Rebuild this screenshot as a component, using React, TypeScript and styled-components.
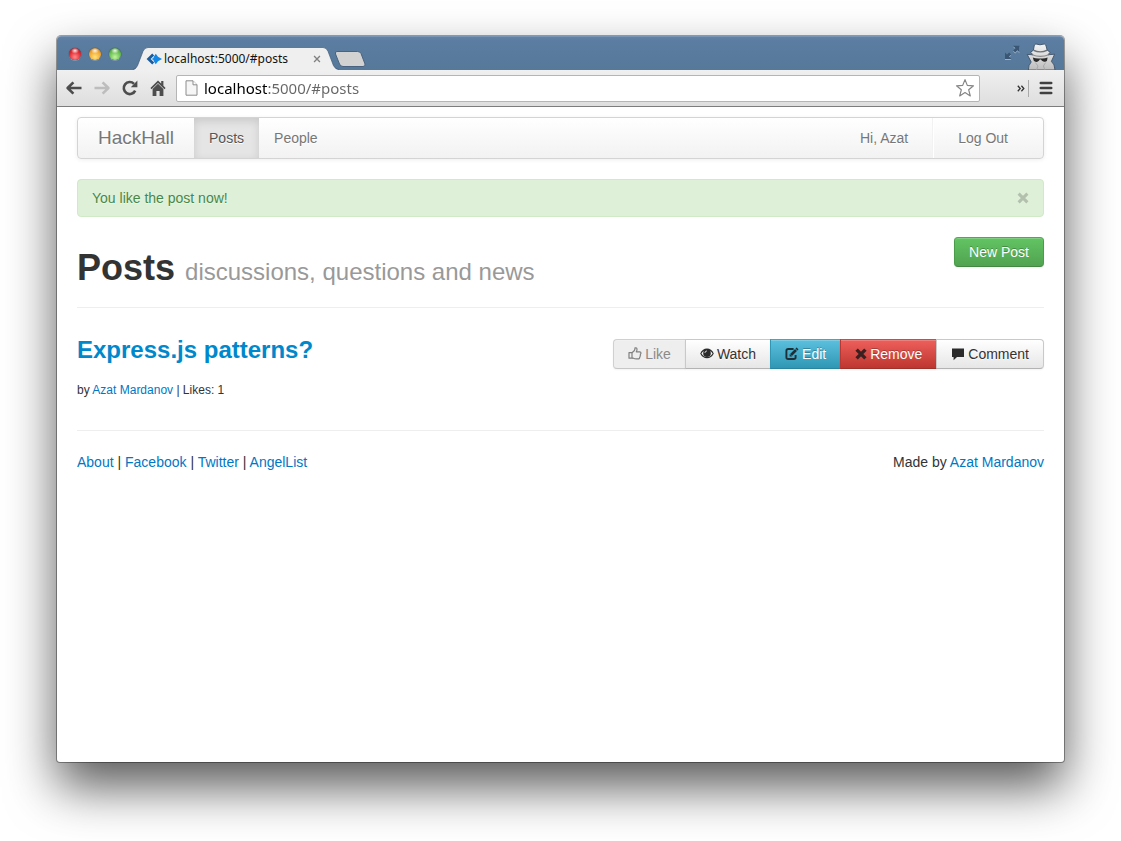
import React from 'react';
import styled, { createGlobalStyle, css } from 'styled-components';

const GlobalStyle = createGlobalStyle`
  *, *::before, *::after { box-sizing: border-box; }
  body {
    margin: 0;
    background: #fff;
    color: #333;
    font: 14px/20px "Helvetica Neue", "Liberation Sans", Arial, sans-serif;
  }
  a { color: #0077c4; text-decoration: none; }
  a:hover { text-decoration: underline; }
  button { font-family: inherit; cursor: pointer; }
  svg { display: block; flex: none; }
`;

const Desktop = styled.div`
  display: flex;
  min-height: 100vh;
  padding: 36px 57px 79px;
`;

const Window = styled.div`
  flex: 1;
  min-width: 0;
  display: flex;
  flex-direction: column;
  background: #fff;
  border-radius: 4px 4px 3px 3px;
  box-shadow: 0 0 0 1px rgba(0, 0, 0, 0.35), 0 25px 50px rgba(0, 0, 0, 0.65);
`;

/* Browser chrome */

const TitleBar = styled.header`
  display: flex;
  align-items: flex-end;
  height: 34px;
  padding: 0 8px 0 12px;
  background: linear-gradient(#6482a5, #5b7da1 4px, #567899);
  border-radius: 4px 4px 0 0;
  border-top: 1px solid #7b96b5;
`;

const Lights = styled.div`
  display: flex;
  gap: 8px;
  padding-bottom: 10px;
`;

const Light = styled.button<{ $rim: string; $core: string; $glow: string }>`
  width: 12px;
  height: 12px;
  padding: 0;
  border: 0;
  border-radius: 50%;
  background:
    radial-gradient(ellipse 4px 3px at 50% 22%, rgba(255, 255, 255, 0.9), rgba(255, 255, 255, 0) 100%),
    radial-gradient(circle at 50% 75%, ${p => p.$glow}, ${p => p.$core} 55%, ${p => p.$rim} 100%);
  box-shadow: 0 0 1px rgba(0, 0, 0, 0.7), 0 1px 0 rgba(255, 255, 255, 0.3);
`;

const Tab = styled.div`
  position: relative;
  display: flex;
  align-items: center;
  width: 206px;
  height: 23px;
  margin-left: 12px;
  padding: 0 18px 0 13px;
`;

const TabShape = styled.svg`
  position: absolute;
  inset: 0;
`;

const TabIcon = styled.span`
  position: relative;
`;

const TabTitle = styled.span`
  position: relative;
  flex: 1;
  margin-left: 2px;
  color: #111;
  font: 12px/16px "Lucida Grande", "Noto Sans", sans-serif;
  white-space: nowrap;
`;

const BareButton = styled.button`
  position: relative;
  display: flex;
  align-items: center;
  justify-content: center;
  padding: 0;
  border: 0;
  background: none;
  color: #4d4d4d;
`;

const NewTab = styled(BareButton)`
  margin: 0 0 3px -5px;
`;

const WindowTools = styled.div`
  display: flex;
  align-items: flex-end;
  gap: 6px;
  margin-left: auto;
`;

const FullscreenButton = styled(BareButton)`
  margin-bottom: 10px;
`;

const Toolbar = styled.nav`
  display: flex;
  align-items: center;
  height: 37px;
  padding: 0 11px 0 8px;
  background: linear-gradient(#f0f0f0, #dedede);
  border-bottom: 1px solid #7d7d7d;
`;

const NavButtons = styled.div`
  display: flex;
  gap: 10px;
`;

const AddressBar = styled.label`
  flex: 1;
  min-width: 0;
  display: flex;
  align-items: center;
  gap: 6px;
  height: 27px;
  margin: 0 37px 0 9px;
  padding: 0 4px 0 8px;
  background: #fff;
  border: 1px solid #b5b5b5;
  border-radius: 2px;
`;

const AddressInput = styled.input`
  flex: 1;
  min-width: 0;
  padding: 0;
  border: 0;
  outline: 0;
  height: 24px;
  font: 15px/24px "Lucida Grande", "Noto Sans", sans-serif;
  color: #666;
  background: linear-gradient(90deg, #000 63px, #666 63px);
  -webkit-background-clip: text;
  background-clip: text;
  -webkit-text-fill-color: transparent;
`;

const ToolDivider = styled.span`
  width: 1px;
  height: 17px;
  margin: 0 10px 0 3px;
  background: #aaa;
`;

/* Page */

const Page = styled.main`
  padding: 10px 20px 20px;
`;

const Navbar = styled.nav`
  display: flex;
  height: 42px;
  padding-right: 20px;
  background: linear-gradient(#fff, #f2f2f2);
  border: 1px solid #d4d4d4;
  border-radius: 4px;
  box-shadow: 0 1px 4px rgba(0, 0, 0, 0.065);
  text-shadow: 0 1px 0 #fff;
  line-height: 40px;
`;

const Brand = styled.a`
  padding: 0 20px;
  font-size: 19px;
  && { color: #777; }
`;

const NavLink = styled.a<{ $active?: boolean }>`
  padding: 0 15px;
  && { color: #777; }
  ${p => p.$active && css`
    && { color: #555; }
    background: #e5e5e5;
    box-shadow: inset 0 3px 8px rgba(0, 0, 0, 0.125);
  `}
`;

const NavRight = styled.div`
  display: flex;
  margin-left: auto;
`;

const NavDivider = styled.span`
  width: 2px;
  margin: 0 9px;
  border-left: 1px solid #f2f2f2;
  border-right: 1px solid #fff;
`;

const Alert = styled.div`
  display: flex;
  align-items: center;
  justify-content: space-between;
  height: 38px;
  margin-top: 20px;
  padding: 0 14px;
  color: #468847;
  background: #dff0d8;
  border: 1px solid #d0e9c6;
  border-radius: 4px;
  text-shadow: 0 1px 0 rgba(255, 255, 255, 0.5);
`;

const PageHeader = styled.header`
  display: flex;
  justify-content: space-between;
  align-items: flex-start;
  height: 71px;
  margin-top: 20px;
  border-bottom: 1px solid #eee;
`;

const Title = styled.h1`
  margin: 11px 0 0;
  font-size: 36px;
  line-height: 40px;
  color: #333;
`;

const Subtitle = styled.small`
  font-size: 24px;
  font-weight: 400;
  line-height: 40px;
  color: #999;
`;

type Tone = 'plain' | 'disabled' | 'info' | 'danger' | 'success';

const tones: Record<Tone, ReturnType<typeof css>> = {
  plain: css`
    color: #333;
    background: linear-gradient(#fff, #e6e6e6);
    border-color: #c9c9c9 #c9c9c9 #b3b3b3;
    text-shadow: 0 1px 1px rgba(255, 255, 255, 0.75);
  `,
  disabled: css`
    color: #8a8a8a;
    background: #eee;
    border-color: #d0d0d0 #c5c5c5 #c6c6c6 #d0d0d0;
  `,
  info: css`
    color: #fff;
    background: linear-gradient(#5bc0de, #2f96b4);
    border-color: #45a5c2 #2f96b4 #2a84a0;
    text-shadow: 0 -1px 0 rgba(0, 0, 0, 0.25);
  `,
  danger: css`
    color: #fff;
    background: linear-gradient(#ee5f5b, #bd362f);
    border-color: #cb4b47 #bd362f #a0302a;
    text-shadow: 0 -1px 0 rgba(0, 0, 0, 0.25);
  `,
  success: css`
    color: #fff;
    background: linear-gradient(#62c462, #51a351);
    border-color: #51a851 #4a9b4a #438743;
    text-shadow: 0 -1px 0 rgba(0, 0, 0, 0.25);
  `,
};

const Button = styled.button<{ $tone: Tone }>`
  display: flex;
  align-items: center;
  justify-content: center;
  gap: 3px;
  height: 30px;
  padding: 0 14px;
  border: 1px solid;
  border-radius: 4px;
  font-size: 14px;
  line-height: 20px;
  white-space: nowrap;
  box-shadow: inset 0 1px 0 rgba(255, 255, 255, 0.2), 0 1px 2px rgba(0, 0, 0, 0.05);
  ${p => tones[p.$tone]}
`;

const ButtonGroup = styled.div`
  display: flex;
  ${Button} { border-radius: 0; }
  ${Button} + ${Button} { margin-left: -1px; }
  ${Button}:first-child { border-radius: 4px 0 0 4px; }
  ${Button}:last-child { border-radius: 0 4px 4px 0; }
`;

const Post = styled.article`
  display: flex;
  justify-content: space-between;
  align-items: flex-start;
  height: 123px;
  padding-top: 31px;
  border-bottom: 1px solid #eee;
`;

const PostTitle = styled.h2`
  margin: 0;
  font-size: 24px;
  line-height: 22px;
  a { color: #0088cc; }
`;

const Meta = styled.p`
  margin: 19px 0 0;
  font-size: 12px;
  line-height: 20px;
`;

const Footer = styled.footer`
  display: flex;
  justify-content: space-between;
  margin-top: 21px;
`;

const glyph = '#4d4d4d';

const Favicon = () => (
  <svg width="16" height="14" viewBox="0 0 16 14">
    <path d="M7.2 2.6 2.6 7l4.6 4.400" fill="none" stroke="#1b5c9e" strokeWidth="2.800" />
    <path d="M9.800 1.800 12 4.800 16 7l-4 2.200-2.200 3L7.600 9V8L5.400 7l2.200-1V5z" fill="#1488e6" />
  </svg>
);

const Back = ({ color }: { color: string }) => (
  <svg width="18" height="18" viewBox="0 0 18 18" fill="none" stroke={color} strokeWidth="2.600">
    <path d="M8.400 3.400 2.600 9l5.800 5.600M3 9h13.500" strokeLinejoin="round" />
  </svg>
);

const Forward = ({ color }: { color: string }) => (
  <svg width="18" height="18" viewBox="0 0 18 18" fill="none" stroke={color} strokeWidth="2.600">
    <path d="M9.600 3.400 15.400 9l-5.800 5.600M15 9H1.500" strokeLinejoin="round" />
  </svg>
);

const Reload = () => (
  <svg width="18" height="18" viewBox="0 0 18 18">
    <path d="M14.200 11.600A6 6 0 1 1 13 4.800" fill="none" stroke={glyph} strokeWidth="2.600" />
    <path d="M16.400 1.600v6.600H9.800z" fill={glyph} />
  </svg>
);

const Home = () => (
  <svg width="18" height="18" viewBox="0 0 18 18" fill={glyph}>
    <path d="M9 1.400 1.400 8.900l1.200 1.300L9 4l6.400 6.200 1.200-1.300-2.200-2.200V2h-2.200v2.500z" />
    <path d="M9 4.800 3.600 10v7h3.800v-5h3.200v5h3.800v-7z" />
  </svg>
);

const PageIcon = () => (
  <svg width="13" height="16" viewBox="0 0 13 16" stroke="#8c8c8c" strokeLinejoin="round">
    <path d="M1 .8h7l4 4v10.400H1z" fill="#f6f6f6" />
    <path d="M8 .8v4h4" fill="#fff" />
  </svg>
);

const Star = () => (
  <svg width="20" height="20" viewBox="0 0 20 20">
    <path
      d="M10 1.600l2.300 5.800 6.200.4-4.800 4 1.600 6.100L10 14.500l-5.300 3.400 1.600-6.100-4.800-4 6.200-.4z"
      fill="#fff" stroke="#858585" strokeWidth="1.200" strokeLinejoin="round"
    />
  </svg>
);

const Fullscreen = () => (
  <svg width="15" height="15" viewBox="0 0 15 15">
    <g fill="#9db3c9">
      <path d="M8 1.800h6.400v6.400l-2-2-2.200 2.200-2-2 2.200-2.200z" />
      <path d="M6.400 15H0V8.600l2 2 2.200-2.200 2 2L4 12.600z" />
    </g>
    <g fill="#3a5674">
      <path d="M8 .8h6.400v6.400l-2-2-2.200 2.200-2-2 2.200-2.200z" />
      <path d="M6.400 14H0V7.600l2 2 2.200-2.200 2 2L4 11.600z" />
    </g>
  </svg>
);

const Incognito = () => (
  <svg width="30" height="27" viewBox="0 0 30 27">
    <defs>
      <linearGradient id="coat" x1="0" y1="0" x2="0" y2="1">
        <stop offset="0" stopColor="#f4f4f4" />
        <stop offset="1" stopColor="#bdbdbd" />
      </linearGradient>
    </defs>
    <path
      d="M1.200 11.400 7 11.800 4.600 9.200 7.400 7.200 8.400 1.800Q9.600.4 12 1.400q2 .8 4 0 2.800-1 3.800.6l1.400 5.200 3 2-2.200 2.600 6.600-.6-3.200 7.200Q28.800 21 29 27H2.400q-.2-4.800 2.800-8z"
      fill="url(#coat)" stroke="#3c5169" strokeWidth=".9" strokeLinejoin="round"
    />
    <path d="M7.600 6.600Q14.400 9.800 21 6.600l.2 1.300Q14.400 11 7.300 7.900z" fill="#6b7177" />
    <path d="M6 11.800Q14.400 15 22.800 11.800" fill="none" stroke="#8c8c8c" strokeWidth="1.200" />
    <path d="M6.800 14.600q3.600 1.200 7.600.8 4 .4 7.200-.8l-.6 3.200q-1.200 1.600-3.600.8-1.800-.6-2.400-2H13.800q-.6 1.600-2.400 2.200-2.600.4-3.600-1z" fill="#2b2b2b" />
    <path d="M9.400 19.600 12 23l-1.600 4M19.600 19.600 17.400 23l1.600 4" fill="none" stroke="#a4a4a4" strokeWidth=".9" />
  </svg>
);

const Cross = ({ size, color, width }: { size: number; color: string; width: number }) => (
  <svg width={size} height={size} viewBox="0 0 12 12" stroke={color} strokeWidth={width}>
    <path d="M1.600 1.600l8.800 8.800M10.400 1.600l-8.800 8.800" />
  </svg>
);

const ThumbIcon = () => (
  <svg width="14" height="14" viewBox="0 0 14 14" fill="none" stroke="#808080" strokeWidth="1.200" strokeLinejoin="round">
    <path d="M1 5.600h3v5.600H1z" />
    <path d="M4 5.800 6.200 3.800Q7 2.800 7 .8q2-.3 2 1.600 0 1-.7 2.400h3.400q1.300.1 1.300 1.300 0 .8-.7 1.100.6 1-.2 1.700.3 1-.5 1.500.1 1.400-1.500 1.400H8.400Q6.600 11.800 5.400 11.200H4" />
  </svg>
);

const EyeIcon = () => (
  <svg width="14" height="14" viewBox="0 0 14 14">
    <path d="M7 1.600Q2.600 1.600 .2 6.400 2.600 11.200 7 11.200T13.800 6.400Q11.400 1.600 7 1.600z" fill="#2b2b2b" />
    <path d="M4 3.800Q2.400 4.800 1.400 6.400 3.600 10 7 10t5.600-3.600Q11.600 4.800 10 3.800q.8 1 .8 2.400A3.800 3.800 0 0 1 3.200 6.200Q3.200 4.800 4 3.800z" fill="#f2f2f2" />
    <path d="M4.900 6Q4.900 4 7 3.900" fill="none" stroke="#f2f2f2" strokeWidth=".8" />
  </svg>
);

const EditIcon = () => (
  <svg width="14" height="14" viewBox="0 0 14 14" fill="none" stroke="#1d3038">
    <path d="M8.600 2H3.200Q1.400 2 1.400 3.800v6.400Q1.400 12 3.200 12h5.600q1.800 0 1.800-1.800V8" strokeWidth="1.900" />
    <path d="M6 8 11 3" strokeWidth="2.600" />
    <path d="M4.600 9.500V7l2.500 2.500z" fill="#1d3038" stroke="none" />
    <path d="M11.500 1.500l1 1" strokeWidth="1.700" strokeLinecap="round" />
  </svg>
);

const CommentIcon = () => (
  <svg width="14" height="14" viewBox="0 0 14 14" fill="#2b2b2b">
    <path d="M1 1.500h12v8.500H6L2.600 13.200V10H1z" />
  </svg>
);

export default function App() {
  return (
    <>
      <GlobalStyle />
      <Desktop>
        <Window>
          <TitleBar>
            <Lights>
              <Light aria-label="Close window" $rim="#8f1018" $core="#e0282f" $glow="#ff8a8a" />
              <Light aria-label="Minimize window" $rim="#a3641a" $core="#f0a630" $glow="#ffe27a" />
              <Light aria-label="Zoom window" $rim="#39792c" $core="#66bd4e" $glow="#c2f5a0" />
            </Lights>
            <Tab>
              <TabShape width="206" height="23" viewBox="0 0 206 24" preserveAspectRatio="none">
                <path
                  d="M0 24Q3 23 4.500 19.500L10 4.500Q11.500.5 15 .5H190Q193.500.5 195 4.500L200.500 19.500Q202 23 206 24z"
                  fill="#efefef"
                />
                <path
                  d="M0 23.500Q3 23 4.500 19.500L10 4.500Q11.500.5 15 .5H190Q193.500.5 195 4.500L200.500 19.500Q202 23 206 23.500"
                  fill="none" stroke="#3f5b7a" strokeOpacity=".7"
                />
              </TabShape>
              <TabIcon><Favicon /></TabIcon>
              <TabTitle>localhost:5000/#posts</TabTitle>
              <BareButton aria-label="Close tab"><Cross size={8} color="#808080" width={2} /></BareButton>
            </Tab>
            <NewTab aria-label="New tab">
              <svg width="32" height="16" viewBox="0 0 32 16">
                <path
                  d="M3 .5H23.500Q26 .5 27 2.500L31 13Q31.500 15.500 29 15.500H9Q6.500 15.500 5.500 13L1.500 3Q.8.5 3 .5z"
                  fill="#d2d2d2" stroke="#48627f"
                />
              </svg>
            </NewTab>
            <WindowTools>
              <FullscreenButton aria-label="Full screen"><Fullscreen /></FullscreenButton>
              <Incognito />
            </WindowTools>
          </TitleBar>
          <Toolbar>
            <NavButtons>
              <BareButton aria-label="Back"><Back color={glyph} /></BareButton>
              <BareButton aria-label="Forward"><Forward color="#bdbdbd" /></BareButton>
              <BareButton aria-label="Reload"><Reload /></BareButton>
              <BareButton aria-label="Home"><Home /></BareButton>
            </NavButtons>
            <AddressBar>
              <PageIcon />
              <AddressInput aria-label="Address" defaultValue="localhost:5000/#posts" spellCheck={false} />
              <BareButton aria-label="Bookmark"><Star /></BareButton>
            </AddressBar>
            <BareButton aria-label="More extensions">
              <svg width="8" height="7" viewBox="0 0 8 7" fill="none" stroke="#333" strokeWidth="1.300">
                <path d="M.8.800l2.400 2.700L.8 6.200M4.400.8l2.400 2.700-2.400 2.700" />
              </svg>
            </BareButton>
            <ToolDivider />
            <BareButton aria-label="Menu">
              <svg width="14" height="14" viewBox="0 0 14 14" stroke="#404040" strokeWidth="2.600" strokeLinecap="round">
                <path d="M1.800 2h10.400M1.800 7h10.400M1.800 12h10.400" />
              </svg>
            </BareButton>
          </Toolbar>

          <Page>
            <Navbar>
              <Brand href="#">HackHall</Brand>
              <NavLink href="#posts" $active>Posts</NavLink>
              <NavLink href="#people">People</NavLink>
              <NavRight>
                <NavLink href="#profile">Hi, Azat</NavLink>
                <NavDivider />
                <NavLink href="#logout">Log Out</NavLink>
              </NavRight>
            </Navbar>

            <Alert role="alert">
              <span>You like the post now!</span>
              <BareButton aria-label="Dismiss"><Cross size={12} color="#b2c0ad" width={3} /></BareButton>
            </Alert>

            <PageHeader>
              <Title>Posts <Subtitle>discussions, questions and news</Subtitle></Title>
              <Button $tone="success">New Post</Button>
            </PageHeader>

            <Post>
              <div>
                <PostTitle><a href="#post">Express.js patterns?</a></PostTitle>
                <Meta>by <a href="#author">Azat Mardanov</a> | Likes: 1</Meta>
              </div>
              <ButtonGroup>
                <Button $tone="disabled" disabled><ThumbIcon />Like</Button>
                <Button $tone="plain"><EyeIcon />Watch</Button>
                <Button $tone="info"><EditIcon />Edit</Button>
                <Button $tone="danger"><Cross size={12} color="#3a2020" width={3.4} />Remove</Button>
                <Button $tone="plain"><CommentIcon />Comment</Button>
              </ButtonGroup>
            </Post>

            <Footer>
              <div>
                <a href="#about">About</a> | <a href="#facebook">Facebook</a> | <a href="#twitter">Twitter</a> | <a href="#angellist">AngelList</a>
              </div>
              <div>Made by <a href="#author">Azat Mardanov</a></div>
            </Footer>
          </Page>
        </Window>
      </Desktop>
    </>
  );
}
